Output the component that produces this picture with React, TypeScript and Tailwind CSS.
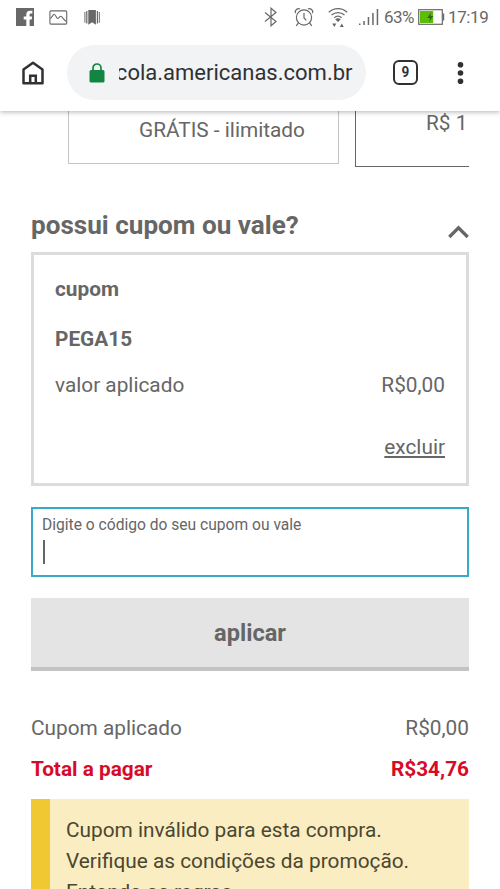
import React from 'react'

const messages = [
  'Cupom inválido para esta compra.',
  'Verifique as condições da promoção.',
  'Entenda as regras.',
]

function StatusBar() {
  return (
    <div className="flex h-[34px] items-center pl-4 text-[#686868]">
      <svg className="h-[18px] w-[18px]" viewBox="0 0 18 18">
        <path fill="currentColor" d="M0 0h18v18h-4.4v-6.6h2.1l.4-2.9h-2.5V7c0-.9.4-1.4 1.3-1.4h1.5V2.8h-2.5c-2.3 0-3.6 1.4-3.6 3.7v2H7.7v2.9h2.6V18H0z" />
      </svg>
      <svg className="ml-[15px] h-[15px] w-[19px]" viewBox="0 0 19 15" fill="none" stroke="currentColor" strokeWidth="1.1">
        <rect x=".9" y=".9" width="16.8" height="13.2" rx="1" />
        <path d="M1.2 8.2c1.6 0 2.6-4 4-4s2.300 4.300 3.500 4.300 1.800-2.300 3-2.300c1.500 0 3.300 4.500 5.800 5.300" />
      </svg>
      <svg className="ml-[16px] h-[15px] w-[16px]" viewBox="0 0 16 15" fill="currentColor">
        <path d="M4.3 0h7.600v14.800L8.100 12.200l-3.800 2.600z" />
        <path d="M2.200 1h1.200v12.600H2.200zM12.800 1H14v12.600h-1.200zM.4 2h1v10.800h-1zM14.800 2h1v10.800h-1z" />
      </svg>
      <svg className="ml-[163px] h-[20px] w-[16px]" viewBox="0 0 16 20" fill="none" stroke="currentColor" strokeWidth="1.2">
        <path d="m2 5.500 11 9-5 4.300V1.200l5 4.300-11 9" />
      </svg>
      <svg className="ml-[15px] h-[20px] w-[20px]" viewBox="0 0 20 20" fill="none" stroke="currentColor" strokeWidth="1.2">
        <circle cx="10" cy="10.500" r="7.600" />
        <path d="M10 6v5l2.300 2.400M1.700 6.200C.2 4 3.300.6 6 2.100M18.300 6.200c1.500-2.200-1.600-5.600-4.300-4.100M4.400 15.900 2.200 18.800M15.600 15.900l2.200 2.900" />
      </svg>
      <svg className="ml-[14px] h-[21px] w-[20px]" viewBox="0 0 20 21" fill="none" stroke="currentColor" strokeWidth="1.3">
        <path d="M.8 5.300c5.200-4.900 13.200-4.900 18.400 0M3.500 8.100c3.800-3.300 9.200-3.300 13 0M6.300 10.700c2.300-1.900 5.100-1.900 7.400 0" />
        <path fill="currentColor" stroke="none" d="M7.200 12.300c1.600-1.300 4-1.300 5.600 0L10 15zM4.200 16.500h4.200l-2.100 3.600zM11.800 20.100h4l-2-3.600z" />
      </svg>
      <svg className="ml-[11px] h-[18px] w-[20px]" viewBox="0 0 20 18" fill="currentColor">
        <path d="M0 15.500h1.500V17H0zM4.300 13h1.500v4H4.300zM8.700 9h1.500v8H8.700zM13.200 5h1.500v12h-1.500zM17.700 1h1.500v16h-1.500z" />
      </svg>
      <span className="ml-[5px] w-[34px] text-[17px] leading-none tracking-[-0.5px]">63%</span>
      <svg className="h-[16px] w-[27px]" viewBox="0 0 27 16">
        <rect x=".7" y=".7" width="23.600" height="14.600" fill="#fff" stroke="#686868" strokeWidth="1.2" />
        <rect x="2" y="2" width="13.200" height="12" fill="#5cbd08" />
        <path fill="#686868" d="M25 4.500h1.200v7H25z" />
        <path fill="#34651a" d="M13.500 3 9.200 9h3l-1.200 4.200L15.300 7h-2.900z" />
      </svg>
      <span className="ml-[3px] text-[17px] leading-none tracking-[-0.4px]">17:19</span>
    </div>
  )
}

function Toolbar() {
  return (
    <div className="flex h-[77px] items-center pl-[21px]">
      <svg className="h-6 w-6" viewBox="0 0 24 24" fill="none" stroke="#303134" strokeWidth="2.500" strokeLinejoin="round">
        <path d="M2.500 8.500 12 1.800l9.500 6.700v13.800h-19z" />
        <path d="M9.200 22v-7.300h5.600V22" strokeLinejoin="miter" />
      </svg>
      <div className="ml-[22px] flex h-[55px] w-[299px] items-center rounded-full bg-[#f1f3f4] pl-[22px]">
        <svg className="h-5 w-4" viewBox="0 0 16 20">
          <rect x=".5" y="7" width="15" height="12.500" rx="1.500" fill="#128541" />
          <path d="M4 8V5a4 4 0 0 1 8 0v3" fill="none" stroke="#128541" strokeWidth="1.700" />
        </svg>
        <div className="ml-[14px] flex w-[233.500px] justify-end overflow-hidden text-[22px] leading-8 text-[#303134]">
          <span className="whitespace-nowrap">cola.americanas.com.br</span>
        </div>
      </div>
      <div className="ml-[27px] flex h-[25px] w-[25px] items-center justify-center rounded-md border-[2.500px] border-[#303134] text-[15px] font-bold text-[#303134]">
        <span className="scale-x-90">9</span>
      </div>
      <svg className="ml-[39px] h-6 w-[7px]" viewBox="0 0 7 24" fill="#303134">
        <circle cx="3.500" cy="3.700" r="2.800" />
        <circle cx="3.500" cy="12" r="2.800" />
        <circle cx="3.500" cy="20.300" r="2.800" />
      </svg>
    </div>
  )
}

export default function App() {
  return (
    <div className="flex h-[889px] w-[500px] flex-col overflow-hidden bg-white font-['Roboto',sans-serif] text-[20.8px] text-[#666]">
      <header className="relative shrink-0 bg-white shadow-[0_1px_5px_rgba(0,0,0,0.3)]">
        <StatusBar />
        <Toolbar />
      </header>

      <main className="flex shrink-0 flex-col px-[31px]">
        {/* Shipping options */}
        <div className="flex h-[57px] items-start overflow-hidden pl-[37px]">
          <div className="flex h-[53px] w-[271px] shrink-0 justify-center border border-t-0 border-[#c4c4c4] pt-[6px] pl-[37px] leading-[26px]">
            GRÁTIS - ilimitado
          </div>
          <div className="ml-4 h-[56px] w-[114px] shrink-0 border-b border-l border-[#666] pl-[70px] leading-[24px] whitespace-nowrap">
            R$ 1
          </div>
        </div>

        <div className="mt-[41px] flex h-[43px] items-start justify-between">
          <h2 className="text-[26.1px] leading-[32px] font-bold">possui cupom ou vale?</h2>
          <svg className="mt-[15px] h-[15px] w-[21px]" viewBox="0 0 21 15" fill="none" stroke="#666" strokeWidth="3.2">
            <path d="m1.300 13 9.200-9.200 9.200 9.200" />
          </svg>
        </div>

        <section className="flex h-[234px] flex-col border-[3px] border-[#dcdcdc] px-[21px] pt-[20px] leading-[28px]">
          <b>cupom</b>
          <b className="mt-[22px]">PEGA15</b>
          <div className="mt-[18px] flex justify-between">
            <span>valor aplicado</span>
            <span>R$0,00</span>
          </div>
          <a className="mt-[34px] self-end underline">excluir</a>
        </section>

        <div className="mt-[21px] flex h-[70px] flex-col border-2 border-[#37aac7] pt-[7px] pl-[9px]">
          <label className="text-[15.6px] leading-[18px]">Digite o código do seu cupom ou vale</label>
          <span className="mt-[6px] ml-px h-6 w-[1.5px] bg-[#666]" />
        </div>

        <button className="mt-[21px] h-[73px] border-b-4 border-[#c3c3c3] bg-[#e4e4e4] pt-[3px] text-[23.6px] font-bold">aplicar</button>

        <div className="mt-[43px] flex justify-between leading-[28px]">
          <span>Cupom aplicado</span>
          <span>R$0,00</span>
        </div>
        <div className="mt-[13px] flex justify-between leading-[28px] font-bold text-[#d70b28]">
          <span>Total a pagar</span>
          <span>R$34,76</span>
        </div>

        <div className="mt-[16px] h-[120px] border-l-[19px] border-[#efc832] bg-[#faedc2] pt-4 pl-4 leading-[31px] text-[#4b472f]">
          {messages.map((message) => (
            <p key={message}>{message}</p>
          ))}
        </div>
      </main>
    </div>
  )
}
